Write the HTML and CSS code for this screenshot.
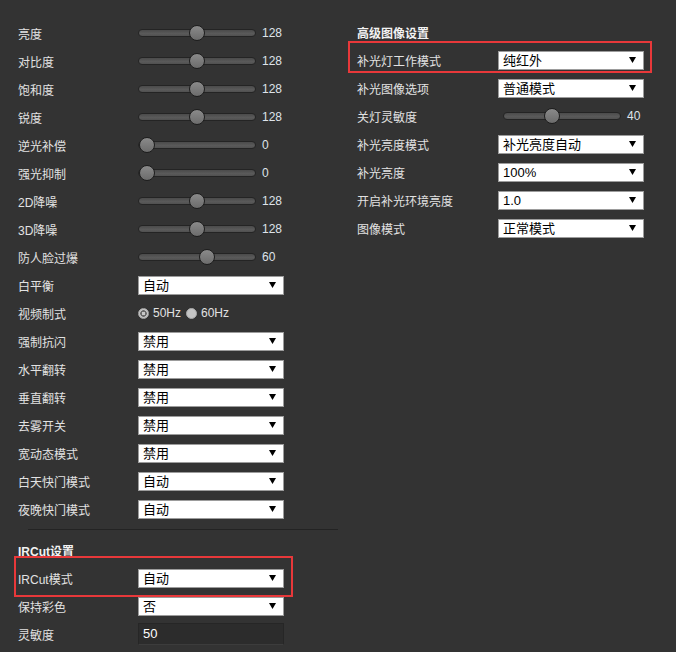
FILE: index.html
```html
<!DOCTYPE html>
<html lang="zh-CN">
<head>
<meta charset="utf-8">
<title>图像设置</title>
<link rel="stylesheet" href="styles.css">
</head>
<body>
<div class="page">
  <div class="col left">
    <div class="row"><span class="label">亮度</span><div class="slider"><div class="thumb" style="left:50px"></div></div><span class="val">128</span></div>
    <div class="row"><span class="label">对比度</span><div class="slider"><div class="thumb" style="left:50px"></div></div><span class="val">128</span></div>
    <div class="row"><span class="label">饱和度</span><div class="slider"><div class="thumb" style="left:50px"></div></div><span class="val">128</span></div>
    <div class="row"><span class="label">锐度</span><div class="slider"><div class="thumb" style="left:50px"></div></div><span class="val">128</span></div>
    <div class="row"><span class="label">逆光补偿</span><div class="slider"><div class="thumb" style="left:0px"></div></div><span class="val">0</span></div>
    <div class="row"><span class="label">强光抑制</span><div class="slider"><div class="thumb" style="left:0px"></div></div><span class="val">0</span></div>
    <div class="row"><span class="label">2D降噪</span><div class="slider"><div class="thumb" style="left:50px"></div></div><span class="val">128</span></div>
    <div class="row"><span class="label">3D降噪</span><div class="slider"><div class="thumb" style="left:50px"></div></div><span class="val">128</span></div>
    <div class="row"><span class="label">防人脸过爆</span><div class="slider"><div class="thumb" style="left:60px"></div></div><span class="val">60</span></div>
    <div class="row"><span class="label">白平衡</span><div class="select"><span>自动</span><svg class="arrow" width="7" height="6" viewBox="0 0 7 6"><polygon points="0,0 7,0 3.5,6"/></svg></div></div>
    <div class="row"><span class="label">视频制式</span>
      <span class="radio on"></span><span class="rtext">50Hz</span>
      <span class="radio"></span><span class="rtext">60Hz</span>
    </div>
    <div class="row"><span class="label">强制抗闪</span><div class="select"><span>禁用</span><svg class="arrow" width="7" height="6" viewBox="0 0 7 6"><polygon points="0,0 7,0 3.5,6"/></svg></div></div>
    <div class="row"><span class="label">水平翻转</span><div class="select"><span>禁用</span><svg class="arrow" width="7" height="6" viewBox="0 0 7 6"><polygon points="0,0 7,0 3.5,6"/></svg></div></div>
    <div class="row"><span class="label">垂直翻转</span><div class="select"><span>禁用</span><svg class="arrow" width="7" height="6" viewBox="0 0 7 6"><polygon points="0,0 7,0 3.5,6"/></svg></div></div>
    <div class="row"><span class="label">去雾开关</span><div class="select"><span>禁用</span><svg class="arrow" width="7" height="6" viewBox="0 0 7 6"><polygon points="0,0 7,0 3.5,6"/></svg></div></div>
    <div class="row"><span class="label">宽动态模式</span><div class="select"><span>禁用</span><svg class="arrow" width="7" height="6" viewBox="0 0 7 6"><polygon points="0,0 7,0 3.5,6"/></svg></div></div>
    <div class="row"><span class="label">白天快门模式</span><div class="select"><span>自动</span><svg class="arrow" width="7" height="6" viewBox="0 0 7 6"><polygon points="0,0 7,0 3.5,6"/></svg></div></div>
    <div class="row"><span class="label">夜晚快门模式</span><div class="select"><span>自动</span><svg class="arrow" width="7" height="6" viewBox="0 0 7 6"><polygon points="0,0 7,0 3.5,6"/></svg></div></div>

    <div class="sep"></div>

    <div class="row"><span class="title">IRCut设置</span></div>
    <div class="row mark-left"><span class="label">IRCut模式</span><div class="select"><span>自动</span><svg class="arrow" width="7" height="6" viewBox="0 0 7 6"><polygon points="0,0 7,0 3.5,6"/></svg></div></div>
    <div class="row"><span class="label">保持彩色</span><div class="select"><span>否</span><svg class="arrow" width="7" height="6" viewBox="0 0 7 6"><polygon points="0,0 7,0 3.5,6"/></svg></div></div>
    <div class="row"><span class="label">灵敏度</span><div class="input">50</div></div>
  </div>

  <div class="col right">
    <div class="row"><span class="title">高级图像设置</span></div>
    <div class="row mark-right"><span class="label">补光灯工作模式</span><div class="select"><span>纯红外</span><svg class="arrow" width="7" height="6" viewBox="0 0 7 6"><polygon points="0,0 7,0 3.5,6"/></svg></div></div>
    <div class="row"><span class="label">补光图像选项</span><div class="select"><span>普通模式</span><svg class="arrow" width="7" height="6" viewBox="0 0 7 6"><polygon points="0,0 7,0 3.5,6"/></svg></div></div>
    <div class="row"><span class="label">关灯灵敏度</span><div class="slider"><div class="thumb" style="left:40px"></div></div><span class="val">40</span></div>
    <div class="row"><span class="label">补光亮度模式</span><div class="select"><span>补光亮度自动</span><svg class="arrow" width="7" height="6" viewBox="0 0 7 6"><polygon points="0,0 7,0 3.5,6"/></svg></div></div>
    <div class="row"><span class="label">补光亮度</span><div class="select"><span>100%</span><svg class="arrow" width="7" height="6" viewBox="0 0 7 6"><polygon points="0,0 7,0 3.5,6"/></svg></div></div>
    <div class="row"><span class="label">开启补光环境亮度</span><div class="select"><span>1.0</span><svg class="arrow" width="7" height="6" viewBox="0 0 7 6"><polygon points="0,0 7,0 3.5,6"/></svg></div></div>
    <div class="row"><span class="label">图像模式</span><div class="select"><span>正常模式</span><svg class="arrow" width="7" height="6" viewBox="0 0 7 6"><polygon points="0,0 7,0 3.5,6"/></svg></div></div>
  </div>
</div>
</body>
</html>
```

FILE: styles.css
```css
html, body {
  margin: 0;
  padding: 0;
  background: #333333;
}
body {
  width: 676px;
  height: 652px;
  overflow: hidden;
  font-family: "Liberation Sans", "Noto Sans CJK SC", sans-serif;
  font-size: 12px;
  color: #e2e2e2;
}
.page {
  display: flex;
  align-items: flex-start;
}
.col {
  padding-top: 19px;
  box-sizing: border-box;
}
.left {
  width: 338px;
}
.right {
  width: 338px;
  padding-top: 18px;
}
.row {
  position: relative;
  height: 28px;
  display: flex;
  align-items: center;
}
.left .row {
  padding-left: 18px;
}
.right .row {
  padding-left: 19px;
}
.label {
  flex: none;
  white-space: nowrap;
}
.left .label {
  width: 120px;
}
.right .label {
  width: 141px;
}
.title {
  font-weight: bold;
  color: #f2f2f2;
}
.slider {
  position: relative;
  flex: none;
  width: 118px;
  height: 8px;
  box-sizing: border-box;
  border: 1px solid #242424;
  border-radius: 4px;
  background: linear-gradient(#4b4b4b, #5a5a5a 60%, #505050);
}
.right .slider {
  margin-left: 5px;
}
.thumb {
  position: absolute;
  top: -5px;
  width: 16px;
  height: 16px;
  box-sizing: border-box;
  border: 1px solid #1d1d1d;
  border-radius: 50%;
  background: linear-gradient(#8a8a8a, #6c6c6c);
}
.val {
  margin-left: 6px;
  color: #dfe3ea;
}
.select {
  flex: none;
  width: 146px;
  height: 19px;
  box-sizing: border-box;
  border: 1px solid #9c9c9c;
  background: #ffffff;
  color: #000;
  font-size: 13px;
  display: flex;
  align-items: center;
  justify-content: space-between;
  padding: 0 7px 0 4px;
  line-height: 17px;
}
.arrow {
  fill: #000;
  display: block;
}
.radio {
  flex: none;
  width: 11px;
  height: 11px;
  box-sizing: border-box;
  border-radius: 50%;
  background: #c4c4c4;
  border: 1px solid #a8a8a8;
  margin-right: 4px;
  position: relative;
}
.radio.on {
  background: radial-gradient(circle, #c8c8c8 0 1.5px, #6a6a6a 2px 3px, #c4c4c4 3.5px);
}
.rtext {
  color: #e2e2e2;
  margin-right: 5px;
}
.sep {
  margin: 6px 0 6px 28px;
  width: 310px;
  border-top: 1px solid #232323;
}
.input {
  flex: none;
  width: 146px;
  height: 22px;
  box-sizing: border-box;
  border: 1px solid #262626;
  border-bottom-color: #3c3c3c;
  background: #2c2c2c;
  color: #ffffff;
  font-size: 13px;
  line-height: 20px;
  padding-left: 4px;
}
.mark-left::after,
.mark-right::after {
  content: "";
  position: absolute;
  box-sizing: border-box;
  border: 2px solid #e8383a;
  pointer-events: none;
}
.mark-left::after {
  left: 14px;
  top: -8px;
  width: 279px;
  height: 41px;
}
.mark-right::after {
  left: 10px;
  top: -5px;
  width: 304px;
  height: 32px;
}
```
